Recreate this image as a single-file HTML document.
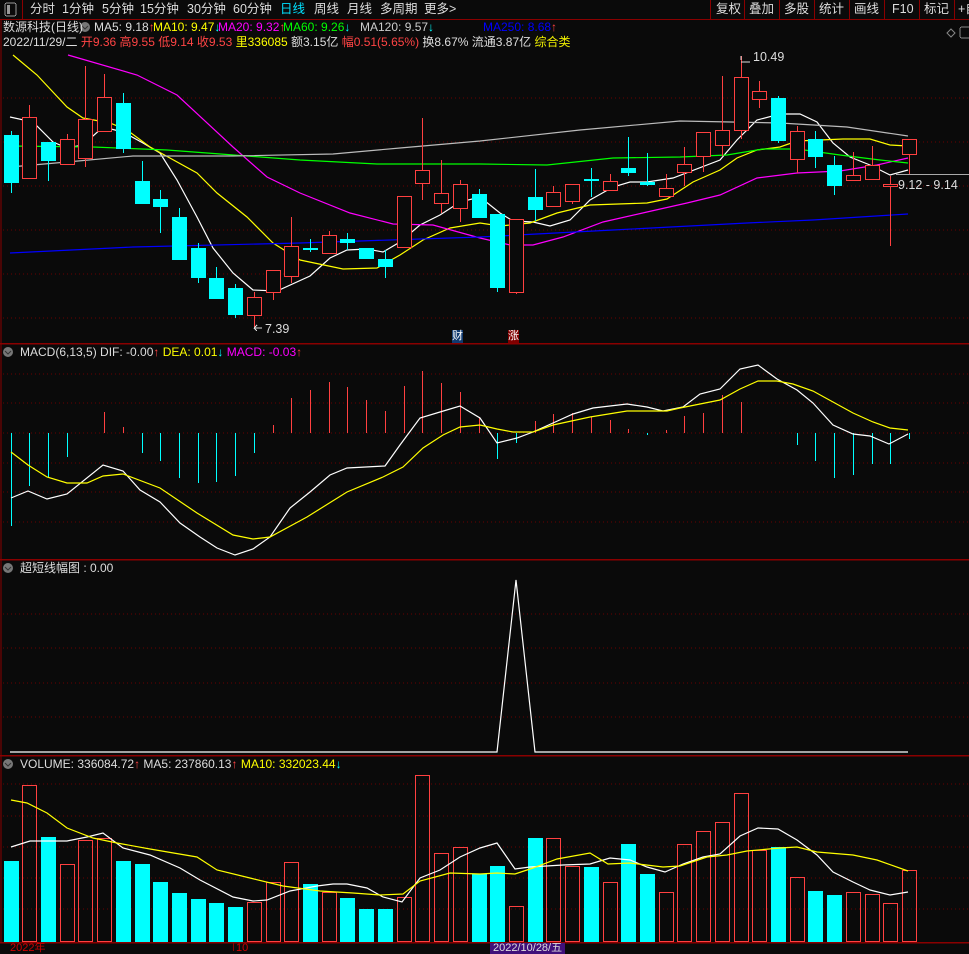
<!DOCTYPE html>
<html><head><meta charset="utf-8"><style>
body{margin:0;background:#0a0a0a;width:969px;height:951px;overflow:hidden;font-family:"Liberation Sans","Noto Sans CJK SC",sans-serif;font-size:12px;color:#ddd}
#wrap{position:relative;width:969px;height:951px}
.t{position:absolute;white-space:nowrap;line-height:14px}
svg{position:absolute;left:0;top:0}
rect,line{shape-rendering:crispEdges}
</style></head><body><div id="wrap">
<svg id="s" width="969" height="951" xmlns="http://www.w3.org/2000/svg"></svg>
<div class="t" style="top:2px;left:0;font-size:12.5px">
<span style="position:absolute;left:30px">分时</span><span style="position:absolute;left:62px">1分钟</span><span style="position:absolute;left:102px">5分钟</span><span style="position:absolute;left:140px">15分钟</span><span style="position:absolute;left:187px">30分钟</span><span style="position:absolute;left:233px">60分钟</span><span style="position:absolute;left:280px;color:#00e0ff">日线</span><span style="position:absolute;left:314px">周线</span><span style="position:absolute;left:347px">月线</span><span style="position:absolute;left:380px">多周期</span><span style="position:absolute;left:424px">更多&gt;</span>
<span style="position:absolute;left:716px">复权</span><span style="position:absolute;left:749px">叠加</span><span style="position:absolute;left:784px">多股</span><span style="position:absolute;left:819px">统计</span><span style="position:absolute;left:854px">画线</span><span style="position:absolute;left:892px">F10</span><span style="position:absolute;left:924px">标记</span><span style="position:absolute;left:958px">+自</span>
</div>
<div class="t" style="top:20px;left:3px">数源科技(日线)</div>
<div class="t" style="top:20px;left:94px">MA5: 9.18<span style="color:#f44">↑</span></div>
<div class="t" style="top:20px;left:153px;color:#ff0">MA10: 9.47<span style="color:#0ff">↓</span></div>
<div class="t" style="top:20px;left:218px;color:#f0f">MA20: 9.32<span style="color:#f44">↑</span></div>
<div class="t" style="top:20px;left:283px;color:#0f0">MA60: 9.26<span style="color:#0ff">↓</span></div>
<div class="t" style="top:20px;left:360px;color:#ccc">MA120: 9.57<span style="color:#0ff">↓</span></div>
<div class="t" style="top:20px;left:483px;color:#00f">MA250: 8.68<span style="color:#f44">↑</span></div>
<div class="t" style="top:35px;left:3px">2022/11/29/二 <span style="color:#f44">开9.36 高9.55 低9.14 收9.53</span> <span style="color:#ff0">里336085</span> 额3.15亿 <span style="color:#f44">幅0.51(5.65%)</span> 换8.67% 流通3.87亿 <span style="color:#ee0">综合类</span></div>
<div class="t" style="top:345px;left:20px">MACD(6,13,5) DIF: -0.00<span style="color:#f44">↑</span> <span style="color:#ff0">DEA: 0.01<span style="color:#0ff">↓</span></span> <span style="color:#f0f">MACD: -0.03<span style="color:#f44">↑</span></span></div>
<div class="t" style="top:561px;left:20px">超短线幅图 : 0.00</div>
<div class="t" style="top:757px;left:20px">VOLUME: 336084.72<span style="color:#f44">↑</span> MA5: 237860.13<span style="color:#f44">↑</span> <span style="color:#ff0">MA10: 332023.44<span style="color:#0ff">↓</span></span></div>
<div class="t" style="top:50px;left:753px;font-size:12.5px">10.49</div>
<div class="t" style="top:322px;left:265px;font-size:12.5px">7.39</div>
<div class="t" style="top:178px;left:898px;font-size:12.5px">9.12 - 9.14</div>
<div class="t" style="top:330px;left:452px;background:#103a70;color:#fff;font-size:11px;line-height:13px">财</div>
<div class="t" style="top:330px;left:508px;background:#800000;color:#fff;font-size:11px;line-height:13px">涨</div>
<div class="t" style="top:943px;left:490px;background:#40107a;color:#ddd;font-size:11px;line-height:11px;padding:0 3px">2022/10/28/五</div>
<div class="t" style="top:943px;left:10px;color:#c00;font-size:11px;line-height:11px">2022年</div>
<div class="t" style="top:943px;left:236px;color:#c00;font-size:11px;line-height:11px">10</div>
</div>
<script>
var s=document.getElementById('s'),h='';
function L(x1,y1,x2,y2,c,w,d){h+='<line x1="'+x1+'" y1="'+y1+'" x2="'+x2+'" y2="'+y2+'" stroke="'+c+'" stroke-width="'+(w||1)+'"'+(d?' stroke-dasharray="'+d+'"':'')+'/>';}
function P(pts,c){h+='<polyline fill="none" stroke="'+c+'" stroke-width="1.2" points="'+pts.map(p=>p.join(',')).join(' ')+'"/>';}
var B='#8a0000';
L(0,19.5,969,19.5,B);L(22.5,0,22.5,19,B);
h+='<rect x="5" y="3" width="11" height="13" rx="2" fill="none" stroke="#999"/><rect x="7" y="5" width="3" height="9" fill="#999"/>';
[710,744,779,814,849,884,919,954].forEach(x=>L(x+.5,0,x+.5,19,B));
[343.5,559.5,755.5,942.5].forEach(y=>L(0,y,969,y,B,1.5));
L(1,20,1,943,B);
h+='<path d="M947 33 L951 29 L955 33 L951 37Z" fill="none" stroke="#888"/><rect x="960" y="27" width="12" height="11" rx="2" fill="none" stroke="#888"/>';
[[89,27],[12,352],[12,568],[12,764]].forEach(c=>{h+='<circle cx="'+(c[0]-4)+'" cy="'+c[1]+'" r="5" fill="#777"/><path d="M'+(c[0]-7)+' '+(c[1]-1)+' l3 3 l3 -3" stroke="#333" fill="none"/>';});
[98,142,186,230,274,318].forEach(y=>L(3,y,969,y,'#6a0000',1,'1,3'));
[374,403,433,463,492,522].forEach(y=>L(3,y,969,y,'#6a0000',1,'1,3'));
[614,648,683,717].forEach(y=>L(3,y,969,y,'#6a0000',1,'1,3'));
[784,816,847,878,909].forEach(y=>L(3,y,969,y,'#6a0000',1,'1,3'));
var X=i=>10.5+i*18.72;
var R='#ff4040',C='#00ffff';
var K=[[C,135,183,131,193],[R,117,178,105,178],[C,142,161,142,181],[R,139,164,134,164],[R,119,158,66,167],[R,97,131,74,131],[C,103,149,93,153],[C,181,204,161,204],[C,199,207,190,233],[C,217,260,208,260],[C,248,278,243,283],[C,278,299,267,299],[C,288,315,284,318],[R,297,315,292,327],[R,270,292,270,300],[R,246,276,217,283],[C,248,250,239,252],[R,235,253,231,254],[C,239,243,233,250],[C,248,259,248,259],[C,259,267,250,278],[R,196,247,196,247],[R,170,183,118,200],[R,193,203,160,213],[R,184,208,180,222],[C,194,218,189,218],
[C,214,288,214,292],[R,219,292,219,294],[C,197,210,169,221],[R,192,206,186,207],[R,184,201,184,204],[C,179,181,168,197],[R,181,190,174,190],[C,168,173,137,176],[C,182,185,153,186],[R,188,196,174,197],[R,164,172,147,186],[R,132,156,132,172],[R,130,145,76,156],[R,77,130,56,139],[R,91,99,81,108],[C,98,141,96,143],[R,131,159,126,173],[C,139,157,131,168],[C,165,186,156,195],[R,175,180,152,180],[R,165,179,146,179],[R,184,186,176,246],[R,139,154,139,174]];
P([[10,117],[33,122],[53,142],[67,148],[83,145],[103,127],[123,132],[143,143],[160,153],[177,180],[197,217],[213,248],[233,273],[253,290],[277,291],[310,276],[330,258],[347,250],[367,249],[383,252],[400,242],[420,225],[440,215],[460,202],[480,197],[500,213],[513,221],[533,222],[550,226],[570,220],[590,200],[613,187],[630,182],[647,182],[673,178],[720,160],[737,140],[757,120],[780,114],[800,114],[817,122],[833,143],[850,157],[870,165],[890,175],[908,170]],'#fff');
P([[13,55],[37,75],[67,107],[83,118],[110,123],[127,130],[150,147],[197,173],[217,193],[247,217],[273,243],[300,260],[343,269],[377,268],[400,255],[423,240],[450,228],[480,223],[500,226],[530,223],[557,213],[590,205],[647,203],[667,199],[693,182],[720,170],[737,158],[757,150],[780,147],[797,141],[843,139],[870,139],[890,145],[908,146]],'#ff0');
P([[68,55],[137,75],[177,95],[233,147],[267,177],[300,193],[350,213],[393,224],[433,225],[480,238],[510,245],[533,245],[563,237],[603,222],[647,212],[687,203],[720,195],[757,178],[797,173],[840,171],[877,165],[908,158]],'#f0f');
P([[10,146],[93,147],[167,150],[247,156],[300,160],[377,164],[480,164],[547,165],[613,158],[680,157],[727,155],[763,149],[797,149],[840,155],[880,160],[908,163]],'#0f0');
P([[10,167],[67,162],[133,156],[233,156],[333,154],[400,148],[480,141],[580,130],[680,121],[780,123],[847,127],[908,136]],'#bbb');
P([[10,253],[133,247],[300,243],[480,237],[613,230],[747,223],[813,220],[908,214]],'#00f');
K.forEach((k,i)=>{var x=Math.round(X(i));var c=k[0];
 if(c==C){L(x+.5,k[3],x+.5,k[4],C);h+='<rect x="'+(x-7)+'" y="'+k[1]+'" width="15" height="'+Math.max(2,k[2]-k[1])+'" fill="'+C+'"/>';}
 else{L(x+.5,k[3],x+.5,k[1],R);L(x+.5,k[2],x+.5,k[4],R);h+='<rect x="'+(x-6.5)+'" y="'+(k[1]+.5)+'" width="14" height="'+Math.max(1,k[2]-k[1])+'" fill="#0a0a0a" stroke="'+R+'"/>';}
});
L(896,174.5,969,174.5,'#aaa');
L(741,62,750,62,'#ddd');L(741,56,741,60,'#ddd');L(254,328,262,328,'#ddd');L(254,328,257,325,'#ddd');L(254,328,257,331,'#ddd');
var M=[526,486,478,457,433,412,427,453,461,478,483,482,476,453,425,398,390,382,387,400,411,386,371,383,392,417,459,443,421,414,413,417,420,429,435,430,416,413,395,402,433,433,445,461,478,475,464,464,439];
M.forEach((y,i)=>{if(y!=433){var x=Math.round(X(i))+.5;L(x,433,x,y,y<433?R:C);}});
P([[11,498],[28,491],[47,499],[67,494],[103,465],[123,471],[140,490],[160,502],[180,523],[200,537],[217,548],[235,555],[253,549],[270,537],[290,508],[310,492],[330,475],[347,468],[385,466],[400,445],[420,418],[440,412],[460,406],[480,418],[497,443],[517,438],[533,432],[553,423],[573,414],[593,408],[627,404],[647,407],[663,411],[683,407],[700,394],[720,389],[740,369],[758,365],[777,379],[797,390],[813,403],[833,425],[853,434],[870,436],[889,444],[908,434]],'#fff');
P([[11,452],[28,465],[47,477],[67,483],[87,483],[103,476],[123,474],[160,488],[197,513],[233,535],[253,539],[270,537],[307,517],[347,492],[383,477],[403,467],[423,448],[443,435],[460,427],[480,425],[497,429],[513,432],[533,432],[553,425],[590,417],[627,411],[667,411],[680,408],[720,400],[740,389],[758,381],[777,381],[793,384],[813,391],[833,402],[853,413],[873,422],[890,428],[908,430]],'#ff0');
P([[10,752],[497,752],[516,580],[535,752],[908,752]],'#fff');
var V=[861,785,837,864,840,838,861,864,882,893,899,903,907,902,882,862,884,892,898,909,909,897,775,853,847,874,866,906,838,838,866,867,882,844,874,892,844,831,822,793,850,847,877,891,895,892,894,903,870];
V.forEach((y,i)=>{var x=Math.round(X(i));var c=K[i][0];
 if(c==C)h+='<rect x="'+(x-7)+'" y="'+y+'" width="15" height="'+(942-y)+'" fill="'+C+'"/>';
 else h+='<rect x="'+(x-6.5)+'" y="'+(y+.5)+'" width="14" height="'+(941-y)+'" fill="none" stroke="'+R+'"/>';});
P([[11,847],[30,841],[67,841],[87,837],[103,833],[123,848],[150,855],[180,868],[200,880],[233,897],[253,901],[267,900],[290,891],[317,886],[333,884],[347,884],[367,888],[383,897],[402,902],[420,878],[440,870],[460,857],[480,848],[497,843],[515,869],[530,867],[563,865],[590,864],[610,858],[630,860],[647,867],[665,872],[683,864],[703,857],[720,854],[740,836],[758,828],[778,829],[797,840],[817,855],[833,872],[853,882],[870,890],[890,895],[908,892]],'#fff');
P([[11,800],[27,803],[47,813],[67,828],[93,838],[117,843],[150,849],[197,857],[217,870],[250,878],[283,886],[320,891],[353,893],[380,895],[403,894],[420,881],[450,873],[480,874],[497,873],[515,874],[533,868],[557,859],[590,853],[608,864],[630,863],[663,867],[680,866],[707,857],[727,855],[747,851],[780,848],[797,847],[817,852],[853,855],[877,860],[908,871]],'#ff0');
L(233.5,943,233.5,951,B);
s.innerHTML=h;
</script>
</body></html>
